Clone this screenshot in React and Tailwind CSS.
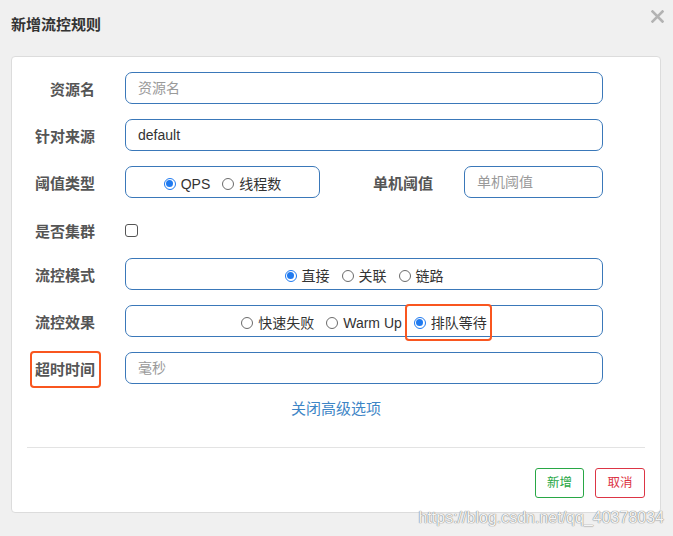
import React from "react";

const FONT = { fontFamily: '"Liberation Sans", "Noto Sans CJK SC", sans-serif' };

function Radio({ checked, label }) {
  return (
    <span className="flex items-center gap-[5px]">
      {checked ? (
        <span className="w-[12px] h-[12px] rounded-full border-[1.5px] border-[#1f7af0] bg-white flex items-center justify-center">
          <span className="w-[7px] h-[7px] rounded-full bg-[#1f7af0]" />
        </span>
      ) : (
        <span className="w-[12px] h-[12px] rounded-full border border-[#6b6b6b] bg-white" />
      )}
      <span className="text-[14px] text-[#333] leading-[18px]">{label}</span>
    </span>
  );
}

function Label({ children, className = "" }) {
  return (
    <div className={"w-[68px] shrink-0 text-right text-[15px] font-bold text-[#555] leading-[20px] pt-[4px] " + className}>
      {children}
    </div>
  );
}

function Input({ placeholder, value, className = "w-[478px]" }) {
  return (
    <div className={"h-[32px] rounded-[7px] border border-[#3a78b9] bg-white flex items-center px-[12px] text-[14px] " + className}>
      {value ? <span className="text-[#333]">{value}</span> : <span className="text-[#9a9a9a]">{placeholder}</span>}
    </div>
  );
}

export default function App() {
  return (
    <div style={FONT} className="relative w-[673px] h-[536px] bg-[#f0f0f0] overflow-hidden">
      <div className="flex items-start justify-between pl-[11px] pr-[9px] pt-[10px]">
        <div className="mt-[5px] text-[15px] font-bold text-[#333] leading-[20px]">新增流控规则</div>
        <svg width="13" height="13" viewBox="0 0 13 13">
          <path d="M1.5 1.5 L11.5 11.5 M11.5 1.5 L1.5 11.5" stroke="#b3b3b3" strokeWidth="2.6" strokeLinecap="square" />
        </svg>
      </div>

      <div className="ml-[11px] mt-[21px] w-[650px] rounded-[4px] border border-[#dcdcdc] bg-white px-[15px] pt-[15px] pb-[14px]">
        <div className="flex items-center h-[32px]">
          <Label>资源名</Label>
          <div className="ml-[30px]"><Input placeholder="资源名" /></div>
        </div>
        <div className="flex items-center h-[32px] mt-[15px]">
          <Label>针对来源</Label>
          <div className="ml-[30px]"><Input value="default" /></div>
        </div>
        <div className="flex items-center h-[32px] mt-[15px]">
          <Label>阈值类型</Label>
          <div className="ml-[30px] w-[195px] h-[32px] rounded-[7px] border border-[#3a78b9] flex items-center justify-center gap-[12px] pt-[3px]">
            <Radio checked label="QPS" />
            <Radio label="线程数" />
          </div>
          <Label className="ml-[45px]">单机阈值</Label>
          <div className="ml-[31px]"><Input placeholder="单机阈值" className="w-[139px]" /></div>
        </div>
        <div className="flex items-center h-[30px] mt-[17px]">
          <Label>是否集群</Label>
          <div className="ml-[30px] w-[13px] h-[13px] rounded-[3px] border border-[#555] bg-white" />
        </div>
        <div className="flex items-center h-[32px] mt-[13px]">
          <Label>流控模式</Label>
          <div className="ml-[30px] w-[478px] h-[32px] rounded-[7px] border border-[#3a78b9] flex items-center justify-center gap-[12px] pt-[3px]">
            <Radio checked label="直接" />
            <Radio label="关联" />
            <Radio label="链路" />
          </div>
        </div>
        <div className="flex items-center h-[32px] mt-[15px]">
          <Label>流控效果</Label>
          <div className="ml-[30px] w-[478px] h-[32px] rounded-[7px] border border-[#3a78b9] flex items-center justify-center gap-[12px] pt-[3px]">
            <Radio label="快速失败" />
            <Radio label="Warm Up" />
            <span className="relative">
              <Radio checked label="排队等待" />
              <span className="absolute left-[-9px] right-[-5px] top-[-10px] bottom-[-9px] rounded-[4px] border-2 border-[#f9561f]" />
            </span>
          </div>
        </div>
        <div className="flex items-center h-[32px] mt-[15px]">
          <Label>
            <span className="relative inline-block">
              超时时间
              <span className="absolute left-[-5px] right-[-6px] top-[-9px] bottom-[-8px] rounded-[4px] border-2 border-[#f9561f]" />
            </span>
          </Label>
          <div className="ml-[30px]"><Input placeholder="毫秒" /></div>
        </div>

        <div className="mt-[15px] text-center text-[15px] leading-[20px] text-[#3d85c6]">关闭高级选项</div>

        <div className="mt-[28px] border-t border-[#e3e3e3]" />

        <div className="mt-[20px] flex justify-end gap-[11px]">
          <div className="w-[49px] h-[30px] rounded-[3px] border border-[#28a745] text-[#28a745] text-[12.5px] flex items-center justify-center">新增</div>
          <div className="w-[50px] h-[30px] rounded-[3px] border border-[#dc3545] text-[#dc3545] text-[12.5px] flex items-center justify-center">取消</div>
        </div>
      </div>

      <div className="absolute right-[9px] top-[509px] text-[16px] leading-[18px] text-[#f4f4f4] [text-shadow:0_0_1px_#707070,0_0_1px_#909090]" style={{ fontFamily: '"Liberation Sans", Arial, sans-serif' }}>
        https://blog.csdn.net/qq_40378034
      </div>
    </div>
  );
}
